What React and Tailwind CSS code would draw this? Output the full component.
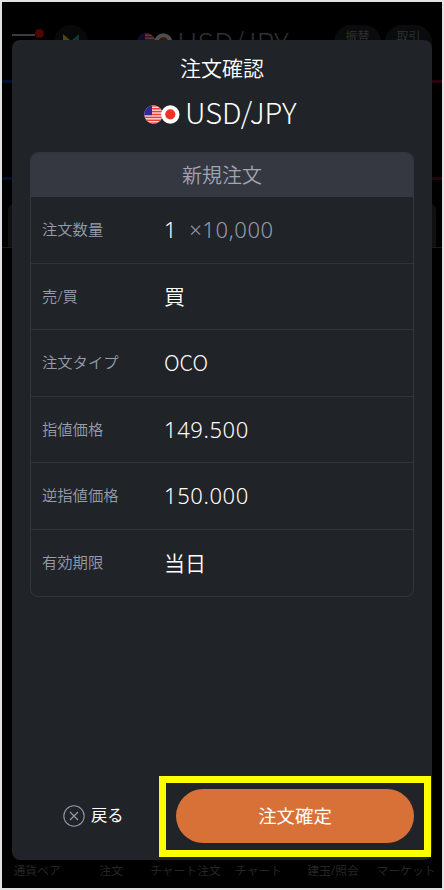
const rows = [
  { label: '注文数量', value: '1', unit: '×10,000' },
  { label: '売/買', value: '買', font: "pb-px font-['Noto_Sans_CJK_JP',sans-serif] text-[21px] font-[350]" },
  { label: '注文タイプ', value: 'OCO', font: "pb-px font-['Noto_Sans_CJK_JP',sans-serif] text-[21.5px] font-light" },
  { label: '指値価格', value: '149.500' },
  { label: '逆指値価格', value: '150.000' },
  { label: '有効期限', value: '当日', font: "pb-px font-['Noto_Sans_CJK_JP',sans-serif] text-[21px] font-[350]" }
]

const tabs = [
  { name: '通貨ペア', width: 'w-[70px]' },
  { name: '注文', width: 'w-[78px]' },
  { name: 'チャート注文', width: 'w-[71px]' },
  { name: 'チャート', width: 'w-[75px]' },
  { name: '建玉/照会', width: 'w-[74px]' },
  { name: 'マーケット', width: 'w-[72px]' }
]

function Flags({ className }) {
  return (
    <svg viewBox="0 0 36 19" className={className}>
      <defs>
        <clipPath id="us">
          <circle cx="9.5" cy="9.5" r="9.2" />
        </clipPath>
      </defs>
      <g clipPath="url(#us)">
        <rect width="19" height="19" fill="#f8ecec" />
        {[0, 2.9, 5.8, 8.7, 11.6, 14.5, 17.4].map((y) => (
          <rect key={y} y={y} width="19" height="1.6" fill="#ef3b36" />
        ))}
        <rect width="8" height="10.2" fill="#2c2a9c" />
      </g>
      <circle cx="26.3" cy="9.5" r="9.2" fill="#fff" />
      <circle cx="26.3" cy="9.3" r="5.1" fill="#ee3322" />
    </svg>
  )
}

function Backdrop() {
  return (
    <div className="flex h-full flex-col">
      <div className="flex h-[78px] items-start pt-[23px] pl-[10px] text-[#303030]">
        <div className="flex w-[32px] shrink-0 items-start pt-[4px]">
          <div className="mt-[5px] h-[2px] w-[23px] bg-[#3c3c3c]" />
          <div className="size-[9px] rounded-full bg-[#4e0505]" />
        </div>
        <div className="ml-[10px] flex size-[34px] shrink-0 justify-center rounded-full bg-[#080808] pt-2">
          <svg viewBox="0 0 16 16" className="size-4">
            <path d="M0 1l8 7v8L0 9z" fill="#4a480b" />
            <path d="M16 1L8 8v8l8-7z" fill="#0f3a32" />
          </svg>
        </div>
        <Flags className="mt-[8px] ml-[49px] w-[36px] shrink-0 opacity-30" />
        <div className="-mt-px ml-[4px] w-[157px] shrink-0 font-['Noto_Sans_CJK_JP',sans-serif] text-[29px] leading-[34px] font-light">USD/JPY</div>
        <div className="flex shrink-0 gap-[4px] text-[12px]">
          <div className="h-[34px] w-[47px] rounded-full bg-[#090b0c] pt-[3px] text-center">振替</div>
          <div className="h-[34px] w-[47px] rounded-full bg-[#090b0c] pt-[3px] text-center">取引</div>
        </div>
      </div>
      <div className="h-[100px] border-y-3 border-transparent bg-[linear-gradient(90deg,#000f2b_50%,#2b000e_50%)] bg-origin-border">
        <div className="h-full bg-black" />
      </div>
      <div className="mx-[6px] mt-[24px] h-[43px] rounded-t-md bg-[#101010]" />
      <div className="h-px bg-[#1b1b1b]" />
      <div className="mt-auto flex h-[28px] pt-[1px] text-center text-[11.8px] leading-[18px] whitespace-nowrap text-[#262626]">
        {tabs.map((tab) => (
          <div key={tab.name} className={`flex shrink-0 justify-center ${tab.width}`}>{tab.name}</div>
        ))}
      </div>
    </div>
  )
}

export default function App() {
  return (
    <div className="relative h-[890px] w-[444px] overflow-hidden border-2 border-[#e0e3e2] bg-black font-['Noto_Sans','Noto_Sans_CJK_JP',sans-serif]">
      <Backdrop />
      {/* Order confirmation */}
      <div className="absolute top-[38px] left-[10px] flex h-[820px] w-[420px] flex-col rounded-lg bg-[#202327] text-white">
        <h1 className="mt-[13px] text-center text-[21px] leading-[30px] font-[350]">注文確認</h1>
        <div className="mt-[13px] flex h-[36px] items-center pl-[132px]">
          <Flags className="w-[36px]" />
          <div className="-mt-[7px] ml-[5px] font-['Noto_Sans_CJK_JP',sans-serif] text-[29px] leading-[36px] font-light">USD/JPY</div>
        </div>
        <div className="mt-[20px] ml-[18px] flex h-[445px] w-[384px] flex-col overflow-hidden rounded-lg border border-[#33363e]">
          <div className="h-[44px] bg-[#353840] text-center text-[20px] leading-[45px] font-[350] text-[#a0a5b5]">新規注文</div>
          <div className="grid flex-1 grid-rows-6 divide-y divide-[#303339]">
            {rows.map((row) => (
              <div key={row.label} className="flex items-center pl-[11px]">
                <div className="w-[122px] text-[15.3px] font-[350] text-[#969cac]">{row.label}</div>
                <div className={row.font || 'text-[22px] font-[350] tracking-[0.6px]'}>
                  {row.value}
                  {row.unit && <span className="ml-[12px] text-[#969cac]">{row.unit}</span>}
                </div>
              </div>
            ))}
          </div>
        </div>
        <div className="mt-auto mb-[3px] flex items-center pl-[51px]">
          <button className="flex w-[96px] items-center gap-[6px] pb-[2px] text-[16.3px]">
            <svg viewBox="0 0 22 22" className="size-[22px]" fill="none" stroke="#9298a8">
              <circle cx="11" cy="11" r="10.2" strokeWidth="1.1" />
              <path d="M7 7l8 8M15 7l-8 8" strokeWidth="1.2" />
            </svg>
            戻る
          </button>
          <div className="h-[81px] w-[272px] border-7 border-[#ffff00] px-[10px] py-[6px]">
            <button className="h-[54px] w-[238px] rounded-full bg-[#d87137] text-[18.4px]">注文確定</button>
          </div>
        </div>
      </div>
    </div>
  )
}
